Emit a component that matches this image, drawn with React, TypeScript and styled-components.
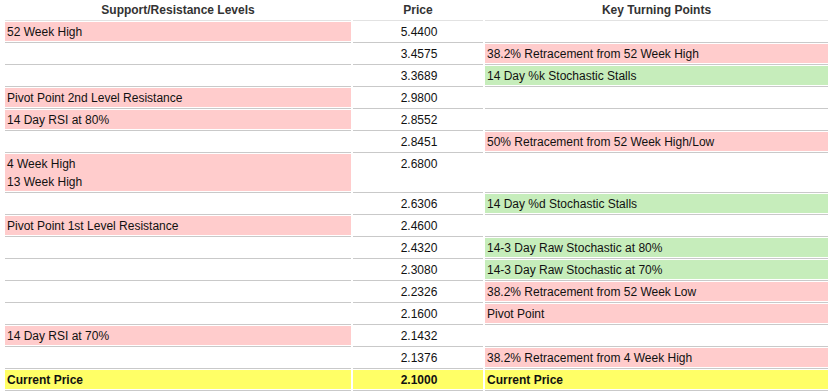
import React from 'react';
import styled, { createGlobalStyle } from 'styled-components';

type Tone = 'none' | 'red' | 'green' | 'current';

interface Level {
  support: string[];
  supportTone: Tone;
  price: string;
  turning: string;
  turningTone: Tone;
}

const GlobalStyle = createGlobalStyle`
  html, body {
    margin: 0;
    padding: 0;
    background: #ffffff;
  }
  body {
    font-family: "Liberation Sans", Arial, Helvetica, sans-serif;
    font-size: 12px;
    color: #111;
  }
`;

const toneColor = (tone: Tone) =>
  tone === 'red' ? '#ffcccc' :
  tone === 'green' ? '#c6edbb' :
  tone === 'current' ? '#ffff66' :
  'transparent';

const Table = styled.div`
  display: flex;
  flex-direction: column;
  gap: 1px;
  padding: 0 4px 0 5px;
`;

const Row = styled.div`
  display: grid;
  grid-template-columns: 346px 130px 1fr;
  column-gap: 2px;
`;

const HeadCell = styled.div`
  height: 20px;
  line-height: 20px;
  text-align: center;
  font-weight: bold;
  color: #333;
  border-bottom: 1px solid #e2e2e2;
`;

const Cell = styled.div`
  display: flex;
  flex-direction: column;
  padding-bottom: 1px;
  border-bottom: 1px solid #c9c9c9;
`;

const Mark = styled.div<{ $tone: Tone; $center?: boolean }>`
  flex: 1;
  padding: 1px 0 0 2px;
  line-height: 18px;
  min-height: 18px;
  background-color: ${props => toneColor(props.$tone)};
  text-align: ${props => (props.$center ? 'center' : 'left')};
  font-weight: ${props => (props.$tone === 'current' ? 'bold' : 'normal')};
  white-space: nowrap;
`;

const levels: Level[] = [
  { support: ['52 Week High'], supportTone: 'red', price: '5.4400', turning: '', turningTone: 'none' },
  { support: [], supportTone: 'none', price: '3.4575', turning: '38.2% Retracement from 52 Week High', turningTone: 'red' },
  { support: [], supportTone: 'none', price: '3.3689', turning: '14 Day %k Stochastic Stalls', turningTone: 'green' },
  { support: ['Pivot Point 2nd Level Resistance'], supportTone: 'red', price: '2.9800', turning: '', turningTone: 'none' },
  { support: ['14 Day RSI at 80%'], supportTone: 'red', price: '2.8552', turning: '', turningTone: 'none' },
  { support: [], supportTone: 'none', price: '2.8451', turning: '50% Retracement from 52 Week High/Low', turningTone: 'red' },
  { support: ['4 Week High', '13 Week High'], supportTone: 'red', price: '2.6800', turning: '', turningTone: 'none' },
  { support: [], supportTone: 'none', price: '2.6306', turning: '14 Day %d Stochastic Stalls', turningTone: 'green' },
  { support: ['Pivot Point 1st Level Resistance'], supportTone: 'red', price: '2.4600', turning: '', turningTone: 'none' },
  { support: [], supportTone: 'none', price: '2.4320', turning: '14-3 Day Raw Stochastic at 80%', turningTone: 'green' },
  { support: [], supportTone: 'none', price: '2.3080', turning: '14-3 Day Raw Stochastic at 70%', turningTone: 'green' },
  { support: [], supportTone: 'none', price: '2.2326', turning: '38.2% Retracement from 52 Week Low', turningTone: 'red' },
  { support: [], supportTone: 'none', price: '2.1600', turning: 'Pivot Point', turningTone: 'red' },
  { support: ['14 Day RSI at 70%'], supportTone: 'red', price: '2.1432', turning: '', turningTone: 'none' },
  { support: [], supportTone: 'none', price: '2.1376', turning: '38.2% Retracement from 4 Week High', turningTone: 'red' },
];

const App: React.FC = () => {
  return (
    <>
      <GlobalStyle />
      <Table>
        <Row>
          <HeadCell>Support/Resistance Levels</HeadCell>
          <HeadCell>Price</HeadCell>
          <HeadCell>Key Turning Points</HeadCell>
        </Row>
        {levels.map(level => (
          <Row key={level.price}>
            <Cell>
              <Mark $tone={level.supportTone}>
                {level.support.map(s => <div key={s}>{s}</div>)}
              </Mark>
            </Cell>
            <Cell>
              <Mark $tone="none" $center>{level.price}</Mark>
            </Cell>
            <Cell>
              <Mark $tone={level.turningTone}>{level.turning}</Mark>
            </Cell>
          </Row>
        ))}
        {/* current price row */}
        <Row>
          <Cell>
            <Mark $tone="current">Current Price</Mark>
          </Cell>
          <Cell>
            <Mark $tone="current" $center>2.1000</Mark>
          </Cell>
          <Cell>
            <Mark $tone="current">Current Price</Mark>
          </Cell>
        </Row>
      </Table>
    </>
  );
};

export default App;
